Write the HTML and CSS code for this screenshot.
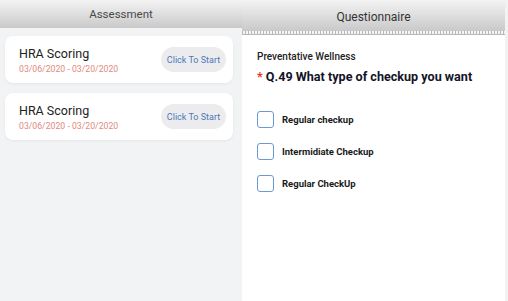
FILE: index.html
```html
<!DOCTYPE html>
<html lang="en">

<head>
    <meta charset="UTF-8">
    <meta name="viewport" content="width=device-width, initial-scale=1.0">
    <title>Assessment</title>
    <link rel="stylesheet" href="styles.css">
</head>

<body>
    <div class="app">
        <div class="assessment-pane">
            <div class="pane-header">Assessment</div>

            <div class="card-list">
                <div class="assessment-card">
                    <div class="card-info">
                        <div class="card-title">HRA Scoring</div>
                        <div class="card-dates">03/06/2020 - 03/20/2020</div>
                    </div>
                    <button type="button" class="start-button">Click To Start</button>
                </div>

                <div class="assessment-card">
                    <div class="card-info">
                        <div class="card-title">HRA Scoring</div>
                        <div class="card-dates">03/06/2020 - 03/20/2020</div>
                    </div>
                    <button type="button" class="start-button">Click To Start</button>
                </div>
            </div>
        </div>

        <div class="question-pane">
            <div class="pane-header question-header">Questionnaire</div>
            <div class="perforation"></div>

            <div class="question-body">
                <div class="section-name">Preventative Wellness</div>
                <div class="question-text"><span class="required">*</span> Q.49 What type of checkup you want</div>

                <div class="options">
                    <label class="option">
                        <span class="check-box"></span>
                        Regular checkup
                    </label>
                    <label class="option">
                        <span class="check-box"></span>
                        Intermidiate Checkup
                    </label>
                    <label class="option">
                        <span class="check-box"></span>
                        Regular CheckUp
                    </label>
                </div>
            </div>
        </div>

        <div class="edge-strip"></div>
    </div>
</body>

</html>
```

FILE: styles.css
```css
/* Basic reset */
* {
    margin: 0;
    padding: 0;
    box-sizing: border-box;
}

body {
    font-family: Roboto, 'Liberation Sans', sans-serif;
    background-color: #f4f4f6;
    color: #222222;
    width: 508px;
    height: 301px;
    overflow: hidden;
}

.app {
    display: flex;
    height: 301px;
}

.assessment-pane {
    width: 242px;
    background-color: #f2f3f5;
}

.pane-header {
    height: 28px;
    display: flex;
    align-items: center;
    justify-content: center;
    font-size: 11.5px;
    color: #4a4a4a;
    background: linear-gradient(#f3f3f3, #c9c9c9);
}

.card-list {
    display: flex;
    flex-direction: column;
    gap: 10px;
    padding: 8px 9px 0 5px;
}

.assessment-card {
    height: 47px;
    background-color: #ffffff;
    border-radius: 8px;
    box-shadow: 0 1px 3px rgba(0, 0, 0, 0.06);
    display: flex;
    align-items: center;
    justify-content: space-between;
    padding: 0 7px 0 14px;
}

.card-title {
    font-size: 12.5px;
    color: #222222;
    margin-bottom: 3px;
}

.card-dates {
    font-size: 8.7px;
    color: #e08a80;
}

.start-button {
    width: 65px;
    height: 25px;
    border: none;
    border-radius: 13px;
    background-color: #ececee;
    color: #4c78b8;
    font-family: Roboto, 'Liberation Sans', sans-serif;
    font-size: 9px;
    cursor: pointer;
}

.question-pane {
    width: 263px;
    background-color: #ffffff;
}

.question-header {
    height: 31px;
    font-size: 12px;
    color: #333333;
    padding-top: 2px;
}

.perforation {
    height: 4px;
    background:
        repeating-linear-gradient(90deg, #b8b8b8 0, #b8b8b8 1px, #f4f4f4 1px, #f4f4f4 3px);
    border-bottom: 1px solid #b8b8b8;
}

.question-body {
    padding: 16px 15px 0 15px;
}

.section-name {
    font-size: 10px;
    font-weight: 500;
    color: #222222;
    margin-bottom: 7px;
}

.question-text {
    font-size: 12.6px;
    font-weight: 700;
    color: #141428;
    margin-bottom: 27px;
}

.required {
    color: #ee3333;
}

.options {
    display: flex;
    flex-direction: column;
    gap: 15px;
}

.option {
    display: flex;
    align-items: center;
    gap: 8px;
    font-size: 9.5px;
    font-weight: 700;
    color: #1a1a1a;
}

.check-box {
    display: block;
    flex-shrink: 0;
    width: 17px;
    height: 17px;
    border-width: 1.5px;
    border-style: solid;
    border-color: #6c99d6;
    border-radius: 3px;
}

.edge-strip {
    width: 3px;
    background-color: #f2f2f4;
}
```
